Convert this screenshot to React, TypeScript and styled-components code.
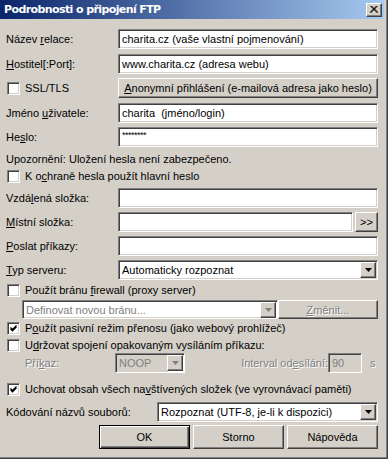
import styled, { createGlobalStyle, css } from 'styled-components';

// --- Win2000 classic colours ---
const FACE = '#d4d0c8';
const SHADOW = '#808080';
const DARK = '#404040';

const GlobalStyle = createGlobalStyle`
  html, body {
    margin: 0;
    padding: 0;
    background: ${FACE};
  }
`;

// sunken 3D edge used by edit boxes, combos and checkboxes
const Sunken = css`
  box-sizing: border-box;
  border: 1px solid;
  border-color: ${SHADOW} #fff #fff ${SHADOW};
  box-shadow: inset 1px 1px ${DARK}, inset -1px -1px ${FACE};
`;

// raised 3D edge used by push buttons
const Raised = css`
  box-sizing: border-box;
  border: 1px solid;
  border-color: #fff ${DARK} ${DARK} #fff;
  box-shadow: inset -1px -1px ${SHADOW};
  background: ${FACE};
`;

const DisabledText = css`
  color: ${SHADOW};
  text-shadow: 1px 1px 0 #fff;
`;

// --- Styled Components ---

const Window = styled.div`
  width: 388px;
  height: 459px;
  box-sizing: border-box;
  padding-right: 4px;
  background: ${FACE};
  box-shadow: inset -1px -1px ${DARK}, inset -2px -2px ${SHADOW};
  display: flex;
  flex-direction: column;
  font-family: 'Liberation Sans', Arial, sans-serif;
  font-size: 11px;
  color: #000;
`;

const TitleBar = styled.div`
  flex: none;
  height: 19px;
  display: flex;
  align-items: center;
  padding: 0 2px 0 4px;
  background: linear-gradient(to right, #0a246a, #a6caf0);
`;

// Tahoma-like bold caption
const Title = styled.span`
  flex: 1;
  color: #fff;
  font-family: 'DejaVu Sans', 'Liberation Sans', sans-serif;
  font-weight: bold;
  font-size: 11px;
  letter-spacing: -0.6px;
  white-space: nowrap;
`;

const CloseButton = styled.div`
  ${Raised}
  flex: none;
  width: 16px;
  height: 14px;
  display: flex;
  align-items: center;
  justify-content: center;
`;

const Body = styled.div`
  display: flex;
  flex-direction: column;
  padding: 0 6px;
`;

const Row = styled.div<{ $top: number; $h?: number; $indent?: number }>`
  display: flex;
  align-items: center;
  height: ${(p) => p.$h ?? 20}px;
  margin-top: ${(p) => p.$top}px;
  padding-left: ${(p) => p.$indent ?? 0}px;
  white-space: nowrap;
`;

const Label = styled.span<{ $w?: number; $disabled?: boolean }>`
  flex: none;
  width: ${(p) => (p.$w ? `${p.$w}px` : 'auto')};
  ${(p) => p.$disabled && DisabledText}
`;

const Key = styled.span`
  text-decoration: underline;
`;

const Field = styled.div<{ $w?: number; $disabled?: boolean; $grey?: boolean }>`
  ${Sunken}
  flex: ${(p) => (p.$w ? 'none' : '1')};
  width: ${(p) => (p.$w ? `${p.$w}px` : 'auto')};
  height: 100%;
  display: flex;
  align-items: center;
  padding: 0 0 0 3px;
  overflow: hidden;
  background: ${(p) => (p.$grey ? FACE : '#fff')};
  ${(p) => p.$disabled && `color: ${SHADOW};`}
`;

const FieldText = styled.span`
  flex: 1;
  overflow: hidden;
`;

const Stars = styled.span`
  font-size: 9px;
  align-self: flex-start;
  margin-top: 2px;
  letter-spacing: -0.5px;
`;

const DropButton = styled.div<{ $disabled?: boolean }>`
  ${Raised}
  flex: none;
  width: 16px;
  height: 16px;
  margin-right: 1px;
  display: flex;
  align-items: center;
  justify-content: center;
  color: ${(p) => (p.$disabled ? SHADOW : '#000')};
  ${(p) => p.$disabled && 'filter: drop-shadow(1px 1px 0 #fff);'}
`;

const PushButton = styled.div<{ $w?: number; $h?: number; $gap?: number; $default?: boolean; $disabled?: boolean }>`
  ${Raised}
  flex: ${(p) => (p.$w ? 'none' : '1')};
  width: ${(p) => (p.$w ? `${p.$w}px` : 'auto')};
  height: ${(p) => p.$h ?? 20}px;
  margin-left: ${(p) => p.$gap ?? 0}px;
  display: flex;
  align-items: center;
  justify-content: center;
  ${(p) => p.$disabled && DisabledText}
  ${(p) =>
    p.$default &&
    css`
      border: 1px solid #000;
      box-shadow: inset 1px 1px #fff, inset -1px -1px ${DARK}, inset -2px -2px ${SHADOW};
    `}
`;

const Box = styled.div`
  ${Sunken}
  flex: none;
  width: 13px;
  height: 13px;
  margin: 0 5px 0 1px;
  background: #fff;
  display: flex;
  align-items: center;
  justify-content: center;
`;

const Spacer = styled.div`
  flex: 1;
`;

const Unit = styled.span`
  ${DisabledText}
  margin-left: 8px;
  width: 8px;
`;

const ButtonBar = styled.div`
  display: flex;
  justify-content: flex-end;
  gap: 3px;
  margin-top: 3px;
`;

// --- Small drawings ---

function Arrow() {
  return (
    <svg width="7" height="4" viewBox="0 0 7 4">
      <polygon points="0,0 7,0 3.5,4" fill="currentColor" />
    </svg>
  );
}

function CheckBox({ checked }: { checked?: boolean }) {
  return (
    <Box>
      {checked && (
        <svg width="7" height="7" viewBox="0 0 7 7">
          <path d="M0.5 2.5 L2.5 4.5 L6.5 0.5 M0.5 3.8 L2.5 5.8 L6.5 1.8" stroke="#000" strokeWidth="1.2" fill="none" />
        </svg>
      )}
    </Box>
  );
}

function Combo({ text, w, disabled, grey }: { text: string; w?: number; disabled?: boolean; grey?: boolean }) {
  return (
    <Field $w={w} $disabled={disabled} $grey={grey}>
      <FieldText>{text}</FieldText>
      <DropButton $disabled={disabled}>
        <Arrow />
      </DropButton>
    </Field>
  );
}

// --- The dialog ---

export default function App() {
  return (
    <>
      <GlobalStyle />
      <Window>
        <TitleBar>
          <Title>Podrobnosti o připojení FTP</Title>
          <CloseButton>
            <svg width="8" height="7" viewBox="0 0 8 7">
              <path d="M0.5 0 L7.5 7 M1.5 0 L8 6.5 M7.5 0 L0.5 7 M6.5 0 L0 6.5" stroke="#000" strokeWidth="1" fill="none" />
            </svg>
          </CloseButton>
        </TitleBar>

        <Body>
          <Row $top={10}>
            <Label $w={112}>Název <Key>r</Key>elace:</Label>
            <Field>charita.cz (vaše vlastní pojmenování)</Field>
          </Row>
          <Row $top={5}>
            <Label $w={112}><Key>H</Key>ostitel[:Port]:</Label>
            <Field>www.charita.cz (adresa webu)</Field>
          </Row>
          <Row $top={4}>
            <Label $w={112}>
              <Row $top={0} $h={13}>
                <CheckBox />
                SSL/TLS
              </Row>
            </Label>
            <PushButton>
              <span><Key>A</Key>nonymní přihlášení (e-mailová adresa jako heslo)</span>
            </PushButton>
          </Row>
          <Row $top={5}>
            <Label $w={112}>Jméno <Key>u</Key>živatele:</Label>
            <Field>charita&nbsp;&nbsp;(jméno/login)</Field>
          </Row>
          <Row $top={4}>
            <Label $w={112}>He<Key>s</Key>lo:</Label>
            <Field><Stars>********</Stars></Field>
          </Row>

          <Row $top={5} $h={14}>Upozornění: Uložení hesla není zabezpečeno.</Row>
          <Row $top={2} $h={16}>
            <CheckBox />
            <span>K o<Key>c</Key>hraně hesla použít hlavní heslo</span>
          </Row>

          <Row $top={4}>
            <Label $w={112}>Vzdá<Key>l</Key>ená složka:</Label>
            <Field />
          </Row>
          <Row $top={4}>
            <Label $w={112}><Key>M</Key>ístní složka:</Label>
            <Field />
            <PushButton $w={23} $gap={2}>&gt;&gt;</PushButton>
          </Row>
          <Row $top={4}>
            <Label $w={112}><Key>P</Key>oslat příkazy:</Label>
            <Field />
          </Row>
          <Row $top={4}>
            <Label $w={112}><Key>T</Key>yp serveru:</Label>
            <Combo text="Automaticky rozpoznat" />
          </Row>

          <Row $top={2} $h={16}>
            <CheckBox />
            <span>Použít bránu <Key>f</Key>irewall (proxy server)</span>
          </Row>
          <Row $top={2} $h={19} $indent={16}>
            <Combo text="Definovat novou bránu..." w={256} disabled />
            <PushButton $w={100} $h={19} $disabled>
              <span><Key>Z</Key>měnit...</span>
            </PushButton>
          </Row>
          <Row $top={1} $h={16}>
            <CheckBox checked />
            <span>P<Key>o</Key>užít pasivní režim přenosu (jako webový prohlížeč)</span>
          </Row>
          <Row $top={1} $h={16}>
            <CheckBox />
            <span>U<Key>d</Key>ržovat spojení opakovaným vysíláním příkazu:</span>
          </Row>
          <Row $top={0} $indent={19}>
            <Label $w={90} $disabled>Pří<Key>k</Key>az:</Label>
            <Combo text="NOOP" w={70} disabled grey />
            <Spacer />
            <Label $disabled>Interval od<Key>e</Key>sílání:</Label>
            <Field $w={34} $disabled $grey>90</Field>
            <Unit>s</Unit>
          </Row>
          <Row $top={8} $h={16}>
            <CheckBox checked />
            <span>Uchovat obsah všech na<Key>v</Key>štívených složek (ve vyrovnávací paměti)</span>
          </Row>
          <Row $top={5}>
            <Label $w={151}>Kódování názvů souborů:</Label>
            <Combo text="Rozpoznat (UTF-8, je-li k dispozici)" />
          </Row>

          <ButtonBar>
            <PushButton $w={91} $h={24} $default>OK</PushButton>
            <PushButton $w={91} $h={24}>Storno</PushButton>
            <PushButton $w={91} $h={24}>Nápověda</PushButton>
          </ButtonBar>
        </Body>
      </Window>
    </>
  );
}
